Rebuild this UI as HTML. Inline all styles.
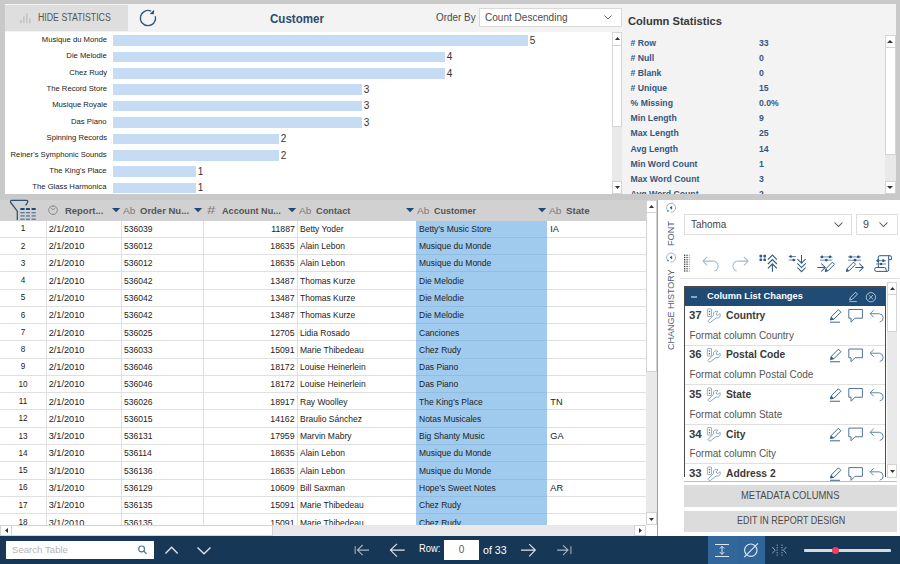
<!DOCTYPE html>
<html><head><meta charset="utf-8"><style>
*{margin:0;padding:0;box-sizing:border-box}
html,body{width:900px;height:564px;overflow:hidden;background:#c9c9c9;font-family:"Liberation Sans",sans-serif;color:#333}
.abs{position:absolute}
.t{position:absolute;white-space:nowrap;line-height:1}
svg{position:absolute;overflow:visible}
</style></head><body>

<div class="abs" style="left:5px;top:3.7px;width:617px;height:28.3px;background:#f3f3f3;"></div>
<div class="abs" style="left:5px;top:5px;width:123.3px;height:25.7px;background:#dedede;"></div>
<svg style="left:15px;top:10px" width="20" height="16" viewBox="15 10 20 16"><g fill="#c4c4c4"><rect x="20.1" y="20" width="1.5" height="3.2"/><rect x="23.1" y="16.2" width="1.5" height="7"/><rect x="26.1" y="13" width="1.5" height="10.2"/><rect x="29.1" y="18.2" width="1.5" height="5"/></g></svg>
<div class="t" style="left:37.91px;transform-origin:0 0;top:12.01px;font-size:10.58px;color:#555;transform:scaleX(0.8294);">HIDE STATISTICS</div>
<svg style="left:136px;top:6px" width="24" height="24" viewBox="0 0 24 24"><path d="M19.34 10.13 A7.6 7.6 0 1 1 15.21 5.21" fill="none" stroke="#2f5a83" stroke-width="1.3"/><path d="M13.8 7.9 L18.2 3.7 L17.7 8.2 Z" fill="#1f4a73"/></svg>
<div class="t" style="left:270.48px;transform-origin:0 0;top:12.93px;font-size:12.32px;font-weight:bold;color:#2b4c6f;transform:scaleX(0.9404);">Customer</div>
<div class="t" style="left:435.85px;transform-origin:0 0;top:12.31px;font-size:10.58px;color:#4a4a4a;transform:scaleX(0.9353);">Order By</div>
<div class="abs" style="left:478.7px;top:8px;width:143.3px;height:19.3px;background:#fff;border:1px solid #d9d9d9"></div>
<div class="t" style="left:485.35px;transform-origin:0 0;top:12.31px;font-size:10.58px;color:#4a4a4a;transform:scaleX(0.9490);">Count Descending</div>
<svg style="left:604px;top:15px" width="8" height="5"><path d="M0.5 0.5 L4 4 L7.5 0.5" fill="none" stroke="#666" stroke-width="1"/></svg>
<div class="abs" style="left:5px;top:32px;width:607px;height:162px;background:#fff;"></div>
<div class="t" style="right:793.33px;transform-origin:100% 0;top:35.80px;font-size:8.12px;color:#222;transform:scaleX(0.945);">Musique du Monde</div>
<div class="abs" style="left:113.3px;top:35.1px;width:414.7px;height:10.7px;background:#c6dcf4;"></div>
<div class="t" style="left:529.65px;transform-origin:0 0;top:35.80px;font-size:10.00px;color:#333;">5</div>
<div class="t" style="right:793.33px;transform-origin:100% 0;top:52.20px;font-size:8.12px;color:#222;transform:scaleX(0.945);">Die Melodie</div>
<div class="abs" style="left:113.3px;top:51.5px;width:331.7px;height:10.7px;background:#c6dcf4;"></div>
<div class="t" style="left:446.65px;transform-origin:0 0;top:52.20px;font-size:10.00px;color:#333;">4</div>
<div class="t" style="right:793.33px;transform-origin:100% 0;top:68.60px;font-size:8.12px;color:#222;transform:scaleX(0.945);">Chez Rudy</div>
<div class="abs" style="left:113.3px;top:67.9px;width:331.7px;height:10.7px;background:#c6dcf4;"></div>
<div class="t" style="left:446.65px;transform-origin:0 0;top:68.60px;font-size:10.00px;color:#333;">4</div>
<div class="t" style="right:793.33px;transform-origin:100% 0;top:85.00px;font-size:8.12px;color:#222;transform:scaleX(0.945);">The Record Store</div>
<div class="abs" style="left:113.3px;top:84.3px;width:248.7px;height:10.7px;background:#c6dcf4;"></div>
<div class="t" style="left:363.65px;transform-origin:0 0;top:85.00px;font-size:10.00px;color:#333;">3</div>
<div class="t" style="right:793.33px;transform-origin:100% 0;top:101.40px;font-size:8.12px;color:#222;transform:scaleX(0.945);">Musique Royale</div>
<div class="abs" style="left:113.3px;top:100.7px;width:248.7px;height:10.7px;background:#c6dcf4;"></div>
<div class="t" style="left:363.65px;transform-origin:0 0;top:101.40px;font-size:10.00px;color:#333;">3</div>
<div class="t" style="right:793.33px;transform-origin:100% 0;top:117.80px;font-size:8.12px;color:#222;transform:scaleX(0.945);">Das Piano</div>
<div class="abs" style="left:113.3px;top:117.1px;width:248.7px;height:10.7px;background:#c6dcf4;"></div>
<div class="t" style="left:363.65px;transform-origin:0 0;top:117.80px;font-size:10.00px;color:#333;">3</div>
<div class="t" style="right:793.33px;transform-origin:100% 0;top:134.20px;font-size:8.12px;color:#222;transform:scaleX(0.945);">Spinning Records</div>
<div class="abs" style="left:113.3px;top:133.5px;width:165.7px;height:10.7px;background:#c6dcf4;"></div>
<div class="t" style="left:280.65px;transform-origin:0 0;top:134.20px;font-size:10.00px;color:#333;">2</div>
<div class="t" style="right:793.33px;transform-origin:100% 0;top:150.60px;font-size:8.12px;color:#222;transform:scaleX(0.945);">Reiner's Symphonic Sounds</div>
<div class="abs" style="left:113.3px;top:149.9px;width:165.7px;height:10.7px;background:#c6dcf4;"></div>
<div class="t" style="left:280.65px;transform-origin:0 0;top:150.60px;font-size:10.00px;color:#333;">2</div>
<div class="t" style="right:793.33px;transform-origin:100% 0;top:167.00px;font-size:8.12px;color:#222;transform:scaleX(0.945);">The King's Place</div>
<div class="abs" style="left:113.3px;top:166.3px;width:82.7px;height:10.7px;background:#c6dcf4;"></div>
<div class="t" style="left:197.65px;transform-origin:0 0;top:167.00px;font-size:10.00px;color:#333;">1</div>
<div class="t" style="right:793.33px;transform-origin:100% 0;top:183.40px;font-size:8.12px;color:#222;transform:scaleX(0.945);">The Glass Harmonica</div>
<div class="abs" style="left:113.3px;top:182.7px;width:82.7px;height:10.7px;background:#c6dcf4;"></div>
<div class="t" style="left:197.65px;transform-origin:0 0;top:183.40px;font-size:10.00px;color:#333;">1</div>
<div class="abs" style="left:612px;top:32px;width:10px;height:162px;background:#e9e9e9;"></div>
<div class="abs" style="left:612px;top:32px;width:10px;height:95px;background:#fff;border:1px solid #d4d4d4"></div>
<div class="abs" style="left:612px;top:32px;width:10px;height:13.5px;background:#fff;border:1px solid #d4d4d4"></div>
<svg style="left:614.5px;top:37px" width="5" height="3"><path d="M0 3 L2.5 0 L5 3Z" fill="#333"/></svg>
<div class="abs" style="left:612px;top:181px;width:10px;height:13px;background:#fff;border:1px solid #d4d4d4"></div>
<svg style="left:614.5px;top:186px" width="5" height="3"><path d="M0 0 L2.5 3 L5 0Z" fill="#333"/></svg>
<div class="abs" style="left:622px;top:3.7px;width:273.6px;height:190.3px;background:#f3f3f3;"></div>
<div class="t" style="left:627.80px;transform-origin:0 0;top:16.14px;font-size:11.59px;font-weight:bold;color:#383838;transform:scaleX(0.9602);">Column Statistics</div>
<div class="abs" style="left:0;top:0;width:885px;height:193.6px;overflow:hidden">
<div class="t" style="left:630.51px;transform-origin:0 0;top:39.01px;font-size:8.70px;font-weight:bold;color:#34577d;"># Row</div>
<div class="t" style="left:759.01px;transform-origin:0 0;top:39.01px;font-size:8.70px;font-weight:bold;color:#34577d;">33</div>
<div class="t" style="left:630.51px;transform-origin:0 0;top:54.08px;font-size:8.70px;font-weight:bold;color:#34577d;"># Null</div>
<div class="t" style="left:759.01px;transform-origin:0 0;top:54.08px;font-size:8.70px;font-weight:bold;color:#34577d;">0</div>
<div class="t" style="left:630.51px;transform-origin:0 0;top:69.15px;font-size:8.70px;font-weight:bold;color:#34577d;"># Blank</div>
<div class="t" style="left:759.01px;transform-origin:0 0;top:69.15px;font-size:8.70px;font-weight:bold;color:#34577d;">0</div>
<div class="t" style="left:630.51px;transform-origin:0 0;top:84.22px;font-size:8.70px;font-weight:bold;color:#34577d;"># Unique</div>
<div class="t" style="left:759.01px;transform-origin:0 0;top:84.22px;font-size:8.70px;font-weight:bold;color:#34577d;">15</div>
<div class="t" style="left:630.51px;transform-origin:0 0;top:99.29px;font-size:8.70px;font-weight:bold;color:#34577d;">% Missing</div>
<div class="t" style="left:759.01px;transform-origin:0 0;top:99.29px;font-size:8.70px;font-weight:bold;color:#34577d;">0.0%</div>
<div class="t" style="left:630.51px;transform-origin:0 0;top:114.36px;font-size:8.70px;font-weight:bold;color:#34577d;">Min Length</div>
<div class="t" style="left:759.01px;transform-origin:0 0;top:114.36px;font-size:8.70px;font-weight:bold;color:#34577d;">9</div>
<div class="t" style="left:630.51px;transform-origin:0 0;top:129.43px;font-size:8.70px;font-weight:bold;color:#34577d;">Max Length</div>
<div class="t" style="left:759.01px;transform-origin:0 0;top:129.43px;font-size:8.70px;font-weight:bold;color:#34577d;">25</div>
<div class="t" style="left:630.51px;transform-origin:0 0;top:144.50px;font-size:8.70px;font-weight:bold;color:#34577d;">Avg Length</div>
<div class="t" style="left:759.01px;transform-origin:0 0;top:144.50px;font-size:8.70px;font-weight:bold;color:#34577d;">14</div>
<div class="t" style="left:630.51px;transform-origin:0 0;top:159.57px;font-size:8.70px;font-weight:bold;color:#34577d;">Min Word Count</div>
<div class="t" style="left:759.01px;transform-origin:0 0;top:159.57px;font-size:8.70px;font-weight:bold;color:#34577d;">1</div>
<div class="t" style="left:630.51px;transform-origin:0 0;top:174.64px;font-size:8.70px;font-weight:bold;color:#34577d;">Max Word Count</div>
<div class="t" style="left:759.01px;transform-origin:0 0;top:174.64px;font-size:8.70px;font-weight:bold;color:#34577d;">3</div>
<div class="t" style="left:630.51px;transform-origin:0 0;top:189.71px;font-size:8.70px;font-weight:bold;color:#34577d;">Avg Word Count</div>
<div class="t" style="left:759.01px;transform-origin:0 0;top:189.71px;font-size:8.70px;font-weight:bold;color:#34577d;">2</div>
</div>
<div class="abs" style="left:885.2px;top:35.1px;width:10.4px;height:158.9px;background:#e9e9e9;"></div>
<div class="abs" style="left:885.2px;top:35.1px;width:10.4px;height:120.4px;background:#fff;border:1px solid #d4d4d4"></div>
<div class="abs" style="left:885.2px;top:35.1px;width:10.4px;height:13px;background:#fff;border:1px solid #d4d4d4"></div>
<svg style="left:887.4px;top:40.2px" width="6" height="3"><path d="M0 3 L3 0 L6 3Z" fill="#333"/></svg>
<div class="abs" style="left:885.2px;top:181px;width:10.4px;height:13px;background:#fff;border:1px solid #d4d4d4"></div>
<svg style="left:887.4px;top:186px" width="6" height="3"><path d="M0 0 L3 3 L6 0Z" fill="#333"/></svg>
<div class="abs" style="left:0;top:199.5px;width:646px;height:325.79999999999995px;background:#fff;overflow:hidden">
<div class="abs" style="left:0px;top:0px;width:646px;height:21.0px;background:#d1d1d1;"></div>
<div class="abs" style="left:415.8px;top:21.0px;width:130.9px;height:400px;background:#a0caee;"></div>
<div class="abs" style="left:0px;top:37.27px;width:415.8px;height:1px;background:#e0e0e0;"></div>
<div class="abs" style="left:415.8px;top:37.27px;width:130.9px;height:1px;background:#92bce0;"></div>
<div class="abs" style="left:546.7px;top:37.27px;width:99.3px;height:1px;background:#e0e0e0;"></div>
<div class="abs" style="left:0px;top:54.54px;width:415.8px;height:1px;background:#e0e0e0;"></div>
<div class="abs" style="left:415.8px;top:54.54px;width:130.9px;height:1px;background:#92bce0;"></div>
<div class="abs" style="left:546.7px;top:54.54px;width:99.3px;height:1px;background:#e0e0e0;"></div>
<div class="abs" style="left:0px;top:71.81px;width:415.8px;height:1px;background:#e0e0e0;"></div>
<div class="abs" style="left:415.8px;top:71.81px;width:130.9px;height:1px;background:#92bce0;"></div>
<div class="abs" style="left:546.7px;top:71.81px;width:99.3px;height:1px;background:#e0e0e0;"></div>
<div class="abs" style="left:0px;top:89.08px;width:415.8px;height:1px;background:#e0e0e0;"></div>
<div class="abs" style="left:415.8px;top:89.08px;width:130.9px;height:1px;background:#92bce0;"></div>
<div class="abs" style="left:546.7px;top:89.08px;width:99.3px;height:1px;background:#e0e0e0;"></div>
<div class="abs" style="left:0px;top:106.35px;width:415.8px;height:1px;background:#e0e0e0;"></div>
<div class="abs" style="left:415.8px;top:106.35px;width:130.9px;height:1px;background:#92bce0;"></div>
<div class="abs" style="left:546.7px;top:106.35px;width:99.3px;height:1px;background:#e0e0e0;"></div>
<div class="abs" style="left:0px;top:123.62px;width:415.8px;height:1px;background:#e0e0e0;"></div>
<div class="abs" style="left:415.8px;top:123.62px;width:130.9px;height:1px;background:#92bce0;"></div>
<div class="abs" style="left:546.7px;top:123.62px;width:99.3px;height:1px;background:#e0e0e0;"></div>
<div class="abs" style="left:0px;top:140.89px;width:415.8px;height:1px;background:#e0e0e0;"></div>
<div class="abs" style="left:415.8px;top:140.89px;width:130.9px;height:1px;background:#92bce0;"></div>
<div class="abs" style="left:546.7px;top:140.89px;width:99.3px;height:1px;background:#e0e0e0;"></div>
<div class="abs" style="left:0px;top:158.16px;width:415.8px;height:1px;background:#e0e0e0;"></div>
<div class="abs" style="left:415.8px;top:158.16px;width:130.9px;height:1px;background:#92bce0;"></div>
<div class="abs" style="left:546.7px;top:158.16px;width:99.3px;height:1px;background:#e0e0e0;"></div>
<div class="abs" style="left:0px;top:175.43px;width:415.8px;height:1px;background:#e0e0e0;"></div>
<div class="abs" style="left:415.8px;top:175.43px;width:130.9px;height:1px;background:#92bce0;"></div>
<div class="abs" style="left:546.7px;top:175.43px;width:99.3px;height:1px;background:#e0e0e0;"></div>
<div class="abs" style="left:0px;top:192.7px;width:415.8px;height:1px;background:#e0e0e0;"></div>
<div class="abs" style="left:415.8px;top:192.7px;width:130.9px;height:1px;background:#92bce0;"></div>
<div class="abs" style="left:546.7px;top:192.7px;width:99.3px;height:1px;background:#e0e0e0;"></div>
<div class="abs" style="left:0px;top:209.97px;width:415.8px;height:1px;background:#e0e0e0;"></div>
<div class="abs" style="left:415.8px;top:209.97px;width:130.9px;height:1px;background:#92bce0;"></div>
<div class="abs" style="left:546.7px;top:209.97px;width:99.3px;height:1px;background:#e0e0e0;"></div>
<div class="abs" style="left:0px;top:227.24px;width:415.8px;height:1px;background:#e0e0e0;"></div>
<div class="abs" style="left:415.8px;top:227.24px;width:130.9px;height:1px;background:#92bce0;"></div>
<div class="abs" style="left:546.7px;top:227.24px;width:99.3px;height:1px;background:#e0e0e0;"></div>
<div class="abs" style="left:0px;top:244.51px;width:415.8px;height:1px;background:#e0e0e0;"></div>
<div class="abs" style="left:415.8px;top:244.51px;width:130.9px;height:1px;background:#92bce0;"></div>
<div class="abs" style="left:546.7px;top:244.51px;width:99.3px;height:1px;background:#e0e0e0;"></div>
<div class="abs" style="left:0px;top:261.78px;width:415.8px;height:1px;background:#e0e0e0;"></div>
<div class="abs" style="left:415.8px;top:261.78px;width:130.9px;height:1px;background:#92bce0;"></div>
<div class="abs" style="left:546.7px;top:261.78px;width:99.3px;height:1px;background:#e0e0e0;"></div>
<div class="abs" style="left:0px;top:279.05px;width:415.8px;height:1px;background:#e0e0e0;"></div>
<div class="abs" style="left:415.8px;top:279.05px;width:130.9px;height:1px;background:#92bce0;"></div>
<div class="abs" style="left:546.7px;top:279.05px;width:99.3px;height:1px;background:#e0e0e0;"></div>
<div class="abs" style="left:0px;top:296.32px;width:415.8px;height:1px;background:#e0e0e0;"></div>
<div class="abs" style="left:415.8px;top:296.32px;width:130.9px;height:1px;background:#92bce0;"></div>
<div class="abs" style="left:546.7px;top:296.32px;width:99.3px;height:1px;background:#e0e0e0;"></div>
<div class="abs" style="left:0px;top:313.59px;width:415.8px;height:1px;background:#e0e0e0;"></div>
<div class="abs" style="left:415.8px;top:313.59px;width:130.9px;height:1px;background:#92bce0;"></div>
<div class="abs" style="left:546.7px;top:313.59px;width:99.3px;height:1px;background:#e0e0e0;"></div>
<div class="abs" style="left:0px;top:330.86px;width:415.8px;height:1px;background:#e0e0e0;"></div>
<div class="abs" style="left:415.8px;top:330.86px;width:130.9px;height:1px;background:#92bce0;"></div>
<div class="abs" style="left:546.7px;top:330.86px;width:99.3px;height:1px;background:#e0e0e0;"></div>
<div class="abs" style="left:0px;top:348.13px;width:415.8px;height:1px;background:#e0e0e0;"></div>
<div class="abs" style="left:415.8px;top:348.13px;width:130.9px;height:1px;background:#92bce0;"></div>
<div class="abs" style="left:546.7px;top:348.13px;width:99.3px;height:1px;background:#e0e0e0;"></div>
<div class="abs" style="left:45.7px;top:21.0px;width:1px;height:400px;background:#e0e0e0;"></div>
<div class="abs" style="left:121.0px;top:21.0px;width:1px;height:400px;background:#e0e0e0;"></div>
<div class="abs" style="left:202.8px;top:21.0px;width:1px;height:400px;background:#e0e0e0;"></div>
<div class="abs" style="left:297.0px;top:21.0px;width:1px;height:400px;background:#e0e0e0;"></div>
</div>
<svg style="left:6px;top:198px" width="34" height="24" viewBox="6 198 34 24"><path d="M10.7 202.5 Q9.9 200.4 11.8 200.4 L26.5 200.4 Q28.4 200.6 27.5 202.5 L25.6 205.3 M10.7 202.5 L17.3 211.2 L17.3 220" fill="none" stroke="#2a5178" stroke-width="1.25"/><rect x="20.3" y="208.1" width="4.4" height="1.9" rx="0.6" fill="#1f4a73"/><rect x="25.9" y="208.1" width="4.1" height="1.9" rx="0.6" fill="#1f4a73"/><rect x="31.5" y="208.1" width="4.3" height="1.9" rx="0.6" fill="#1f4a73"/><rect x="20.3" y="212.1" width="4.4" height="1.25" fill="#52769a"/><rect x="20.3" y="215.3" width="4.4" height="1.25" fill="#52769a"/><rect x="20.3" y="218.6" width="4.4" height="1.25" fill="#52769a"/><rect x="25.9" y="212.1" width="4.1" height="1.25" fill="#52769a"/><rect x="25.9" y="215.3" width="4.1" height="1.25" fill="#52769a"/><rect x="25.9" y="218.6" width="4.1" height="1.25" fill="#52769a"/><rect x="31.5" y="212.1" width="4.3" height="1.25" fill="#52769a"/><rect x="31.5" y="215.3" width="4.3" height="1.25" fill="#52769a"/><rect x="31.5" y="218.6" width="4.3" height="1.25" fill="#52769a"/></svg>
<svg style="left:47.9px;top:205px" width="10" height="10" viewBox="0 0 10 10"><circle cx="5" cy="5.2" r="4.3" fill="none" stroke="#7a7a7a" stroke-width="0.8"/><path d="M2.8 3 L5 4.8 L7.2 3.3" fill="none" stroke="#7a7a7a" stroke-width="0.8"/><path d="M5 0.4 L5 1.6 M5 8.8 L5 10" stroke="#7a7a7a" stroke-width="0.8"/></svg>
<div class="t" style="left:65.07px;transform-origin:0 0;top:205.67px;font-size:9.57px;font-weight:bold;color:#555;transform:scaleX(0.9885);">Report...</div>
<svg style="left:112.2px;top:207.8px" width="8.2" height="4.3" viewBox="0 0 8.2 4.3"><path d="M0 0 L8.2 0 L4.1 4.3Z" fill="#1f4a73"/></svg>
<div class="t" style="left:122.74px;transform-origin:0 0;top:205.77px;font-size:9.57px;color:#7c7c7c;transform:scaleX(1.0607);">Ab</div>
<div class="t" style="left:139.57px;transform-origin:0 0;top:205.67px;font-size:9.57px;font-weight:bold;color:#555;transform:scaleX(0.9926);">Order Nu...</div>
<svg style="left:193.8px;top:207.8px" width="8.2" height="4.3" viewBox="0 0 8.2 4.3"><path d="M0 0 L8.2 0 L4.1 4.3Z" fill="#1f4a73"/></svg>
<div class="t" style="left:206.63px;transform-origin:0 0;top:204.69px;font-size:11.30px;color:#7c7c7c;transform:scaleX(1.3259);">#</div>
<div class="t" style="left:221.59px;transform-origin:0 0;top:205.67px;font-size:9.57px;font-weight:bold;color:#555;transform:scaleX(0.9545);">Account Nu...</div>
<svg style="left:287.8px;top:207.8px" width="8.2" height="4.3" viewBox="0 0 8.2 4.3"><path d="M0 0 L8.2 0 L4.1 4.3Z" fill="#1f4a73"/></svg>
<div class="t" style="left:298.84px;transform-origin:0 0;top:205.77px;font-size:9.57px;color:#7c7c7c;transform:scaleX(1.0607);">Ab</div>
<div class="t" style="left:315.58px;transform-origin:0 0;top:205.67px;font-size:9.57px;font-weight:bold;color:#555;transform:scaleX(0.9674);">Contact</div>
<svg style="left:406.3px;top:207.8px" width="8.2" height="4.3" viewBox="0 0 8.2 4.3"><path d="M0 0 L8.2 0 L4.1 4.3Z" fill="#1f4a73"/></svg>
<div class="t" style="left:417.24px;transform-origin:0 0;top:205.77px;font-size:9.57px;color:#7c7c7c;transform:scaleX(1.0607);">Ab</div>
<div class="t" style="left:434.39px;transform-origin:0 0;top:205.67px;font-size:9.57px;font-weight:bold;color:#555;transform:scaleX(0.9434);">Customer</div>
<svg style="left:537.6px;top:207.8px" width="8.2" height="4.3" viewBox="0 0 8.2 4.3"><path d="M0 0 L8.2 0 L4.1 4.3Z" fill="#1f4a73"/></svg>
<div class="t" style="left:548.54px;transform-origin:0 0;top:205.77px;font-size:9.57px;color:#7c7c7c;transform:scaleX(1.0607);">Ab</div>
<div class="t" style="left:565.56px;transform-origin:0 0;top:205.67px;font-size:9.57px;font-weight:bold;color:#555;transform:scaleX(1.0164);">State</div>
<div class="t" style="left:20.72px;width:4.56px;text-align:center;transform-origin:50% 0;top:225.29px;font-size:8.20px;font-weight:bold;color:#1a1a1a;transform:scaleY(1.04);-webkit-text-stroke:0;font-weight:normal;">1</div>
<div class="t" style="left:48.69px;transform-origin:0 0;top:224.93px;font-size:9.20px;color:#222;">2/1/2010</div>
<div class="t" style="left:124.49px;transform-origin:0 0;top:224.93px;font-size:9.20px;color:#222;transform:scaleX(0.93);">536039</div>
<div class="t" style="right:605.59px;transform-origin:100% 0;top:224.93px;font-size:9.20px;color:#222;transform:scaleX(0.95);">11887</div>
<div class="t" style="left:299.99px;transform-origin:0 0;top:224.93px;font-size:9.20px;color:#222;transform:scaleX(0.925);">Betty Yoder</div>
<div class="t" style="left:419.19px;transform-origin:0 0;top:224.93px;font-size:9.20px;color:#222;transform:scaleX(0.925);">Betty’s Music Store</div>
<div class="t" style="left:550.29px;transform-origin:0 0;top:224.93px;font-size:9.20px;color:#222;">IA</div>
<div class="t" style="left:20.72px;width:4.56px;text-align:center;transform-origin:50% 0;top:242.56px;font-size:8.20px;font-weight:bold;color:#1a1a1a;transform:scaleY(1.04);-webkit-text-stroke:0;font-weight:normal;">2</div>
<div class="t" style="left:48.69px;transform-origin:0 0;top:242.20px;font-size:9.20px;color:#222;">2/1/2010</div>
<div class="t" style="left:124.49px;transform-origin:0 0;top:242.20px;font-size:9.20px;color:#222;transform:scaleX(0.93);">536012</div>
<div class="t" style="right:605.59px;transform-origin:100% 0;top:242.20px;font-size:9.20px;color:#222;transform:scaleX(0.95);">18635</div>
<div class="t" style="left:299.99px;transform-origin:0 0;top:242.20px;font-size:9.20px;color:#222;transform:scaleX(0.925);">Alain Lebon</div>
<div class="t" style="left:419.19px;transform-origin:0 0;top:242.20px;font-size:9.20px;color:#222;transform:scaleX(0.925);">Musique du Monde</div>
<div class="t" style="left:20.72px;width:4.56px;text-align:center;transform-origin:50% 0;top:259.83px;font-size:8.20px;font-weight:bold;color:#1a1a1a;transform:scaleY(1.04);-webkit-text-stroke:0;font-weight:normal;">3</div>
<div class="t" style="left:48.69px;transform-origin:0 0;top:259.47px;font-size:9.20px;color:#222;">2/1/2010</div>
<div class="t" style="left:124.49px;transform-origin:0 0;top:259.47px;font-size:9.20px;color:#222;transform:scaleX(0.93);">536012</div>
<div class="t" style="right:605.59px;transform-origin:100% 0;top:259.47px;font-size:9.20px;color:#222;transform:scaleX(0.95);">18635</div>
<div class="t" style="left:299.99px;transform-origin:0 0;top:259.47px;font-size:9.20px;color:#222;transform:scaleX(0.925);">Alain Lebon</div>
<div class="t" style="left:419.19px;transform-origin:0 0;top:259.47px;font-size:9.20px;color:#222;transform:scaleX(0.925);">Musique du Monde</div>
<div class="t" style="left:20.72px;width:4.56px;text-align:center;transform-origin:50% 0;top:277.10px;font-size:8.20px;font-weight:bold;color:#1a1a1a;transform:scaleY(1.04);-webkit-text-stroke:0;font-weight:normal;">4</div>
<div class="t" style="left:48.69px;transform-origin:0 0;top:276.74px;font-size:9.20px;color:#222;">2/1/2010</div>
<div class="t" style="left:124.49px;transform-origin:0 0;top:276.74px;font-size:9.20px;color:#222;transform:scaleX(0.93);">536042</div>
<div class="t" style="right:605.59px;transform-origin:100% 0;top:276.74px;font-size:9.20px;color:#222;transform:scaleX(0.95);">13487</div>
<div class="t" style="left:299.99px;transform-origin:0 0;top:276.74px;font-size:9.20px;color:#222;transform:scaleX(0.925);">Thomas Kurze</div>
<div class="t" style="left:419.19px;transform-origin:0 0;top:276.74px;font-size:9.20px;color:#222;transform:scaleX(0.925);">Die Melodie</div>
<div class="t" style="left:20.72px;width:4.56px;text-align:center;transform-origin:50% 0;top:294.37px;font-size:8.20px;font-weight:bold;color:#1a1a1a;transform:scaleY(1.04);-webkit-text-stroke:0;font-weight:normal;">5</div>
<div class="t" style="left:48.69px;transform-origin:0 0;top:294.01px;font-size:9.20px;color:#222;">2/1/2010</div>
<div class="t" style="left:124.49px;transform-origin:0 0;top:294.01px;font-size:9.20px;color:#222;transform:scaleX(0.93);">536042</div>
<div class="t" style="right:605.59px;transform-origin:100% 0;top:294.01px;font-size:9.20px;color:#222;transform:scaleX(0.95);">13487</div>
<div class="t" style="left:299.99px;transform-origin:0 0;top:294.01px;font-size:9.20px;color:#222;transform:scaleX(0.925);">Thomas Kurze</div>
<div class="t" style="left:419.19px;transform-origin:0 0;top:294.01px;font-size:9.20px;color:#222;transform:scaleX(0.925);">Die Melodie</div>
<div class="t" style="left:20.72px;width:4.56px;text-align:center;transform-origin:50% 0;top:311.64px;font-size:8.20px;font-weight:bold;color:#1a1a1a;transform:scaleY(1.04);-webkit-text-stroke:0;font-weight:normal;">6</div>
<div class="t" style="left:48.69px;transform-origin:0 0;top:311.28px;font-size:9.20px;color:#222;">2/1/2010</div>
<div class="t" style="left:124.49px;transform-origin:0 0;top:311.28px;font-size:9.20px;color:#222;transform:scaleX(0.93);">536042</div>
<div class="t" style="right:605.59px;transform-origin:100% 0;top:311.28px;font-size:9.20px;color:#222;transform:scaleX(0.95);">13487</div>
<div class="t" style="left:299.99px;transform-origin:0 0;top:311.28px;font-size:9.20px;color:#222;transform:scaleX(0.925);">Thomas Kurze</div>
<div class="t" style="left:419.19px;transform-origin:0 0;top:311.28px;font-size:9.20px;color:#222;transform:scaleX(0.925);">Die Melodie</div>
<div class="t" style="left:20.72px;width:4.56px;text-align:center;transform-origin:50% 0;top:328.91px;font-size:8.20px;font-weight:bold;color:#1a1a1a;transform:scaleY(1.04);-webkit-text-stroke:0;font-weight:normal;">7</div>
<div class="t" style="left:48.69px;transform-origin:0 0;top:328.55px;font-size:9.20px;color:#222;">2/1/2010</div>
<div class="t" style="left:124.49px;transform-origin:0 0;top:328.55px;font-size:9.20px;color:#222;transform:scaleX(0.93);">536025</div>
<div class="t" style="right:605.59px;transform-origin:100% 0;top:328.55px;font-size:9.20px;color:#222;transform:scaleX(0.95);">12705</div>
<div class="t" style="left:299.99px;transform-origin:0 0;top:328.55px;font-size:9.20px;color:#222;transform:scaleX(0.925);">Lidia Rosado</div>
<div class="t" style="left:419.19px;transform-origin:0 0;top:328.55px;font-size:9.20px;color:#222;transform:scaleX(0.925);">Canciones</div>
<div class="t" style="left:20.72px;width:4.56px;text-align:center;transform-origin:50% 0;top:346.18px;font-size:8.20px;font-weight:bold;color:#1a1a1a;transform:scaleY(1.04);-webkit-text-stroke:0;font-weight:normal;">8</div>
<div class="t" style="left:48.69px;transform-origin:0 0;top:345.82px;font-size:9.20px;color:#222;">2/1/2010</div>
<div class="t" style="left:124.49px;transform-origin:0 0;top:345.82px;font-size:9.20px;color:#222;transform:scaleX(0.93);">536033</div>
<div class="t" style="right:605.59px;transform-origin:100% 0;top:345.82px;font-size:9.20px;color:#222;transform:scaleX(0.95);">15091</div>
<div class="t" style="left:299.99px;transform-origin:0 0;top:345.82px;font-size:9.20px;color:#222;transform:scaleX(0.925);">Marie Thibedeau</div>
<div class="t" style="left:419.19px;transform-origin:0 0;top:345.82px;font-size:9.20px;color:#222;transform:scaleX(0.925);">Chez Rudy</div>
<div class="t" style="left:20.72px;width:4.56px;text-align:center;transform-origin:50% 0;top:363.45px;font-size:8.20px;font-weight:bold;color:#1a1a1a;transform:scaleY(1.04);-webkit-text-stroke:0;font-weight:normal;">9</div>
<div class="t" style="left:48.69px;transform-origin:0 0;top:363.09px;font-size:9.20px;color:#222;">2/1/2010</div>
<div class="t" style="left:124.49px;transform-origin:0 0;top:363.09px;font-size:9.20px;color:#222;transform:scaleX(0.93);">536046</div>
<div class="t" style="right:605.59px;transform-origin:100% 0;top:363.09px;font-size:9.20px;color:#222;transform:scaleX(0.95);">18172</div>
<div class="t" style="left:299.99px;transform-origin:0 0;top:363.09px;font-size:9.20px;color:#222;transform:scaleX(0.925);">Louise Heinerlein</div>
<div class="t" style="left:419.19px;transform-origin:0 0;top:363.09px;font-size:9.20px;color:#222;transform:scaleX(0.925);">Das Piano</div>
<div class="t" style="left:18.45px;width:9.11px;text-align:center;transform-origin:50% 0;top:380.72px;font-size:8.20px;font-weight:bold;color:#1a1a1a;transform:scaleY(1.04);-webkit-text-stroke:0;font-weight:normal;">10</div>
<div class="t" style="left:48.69px;transform-origin:0 0;top:380.36px;font-size:9.20px;color:#222;">2/1/2010</div>
<div class="t" style="left:124.49px;transform-origin:0 0;top:380.36px;font-size:9.20px;color:#222;transform:scaleX(0.93);">536046</div>
<div class="t" style="right:605.59px;transform-origin:100% 0;top:380.36px;font-size:9.20px;color:#222;transform:scaleX(0.95);">18172</div>
<div class="t" style="left:299.99px;transform-origin:0 0;top:380.36px;font-size:9.20px;color:#222;transform:scaleX(0.925);">Louise Heinerlein</div>
<div class="t" style="left:419.19px;transform-origin:0 0;top:380.36px;font-size:9.20px;color:#222;transform:scaleX(0.925);">Das Piano</div>
<div class="t" style="left:18.67px;width:8.66px;text-align:center;transform-origin:50% 0;top:397.99px;font-size:8.20px;font-weight:bold;color:#1a1a1a;transform:scaleY(1.04);-webkit-text-stroke:0;font-weight:normal;">11</div>
<div class="t" style="left:48.69px;transform-origin:0 0;top:397.63px;font-size:9.20px;color:#222;">2/1/2010</div>
<div class="t" style="left:124.49px;transform-origin:0 0;top:397.63px;font-size:9.20px;color:#222;transform:scaleX(0.93);">536026</div>
<div class="t" style="right:605.59px;transform-origin:100% 0;top:397.63px;font-size:9.20px;color:#222;transform:scaleX(0.95);">18917</div>
<div class="t" style="left:299.99px;transform-origin:0 0;top:397.63px;font-size:9.20px;color:#222;transform:scaleX(0.925);">Ray Woolley</div>
<div class="t" style="left:419.19px;transform-origin:0 0;top:397.63px;font-size:9.20px;color:#222;transform:scaleX(0.925);">The King’s Place</div>
<div class="t" style="left:550.29px;transform-origin:0 0;top:397.63px;font-size:9.20px;color:#222;">TN</div>
<div class="t" style="left:18.45px;width:9.11px;text-align:center;transform-origin:50% 0;top:415.26px;font-size:8.20px;font-weight:bold;color:#1a1a1a;transform:scaleY(1.04);-webkit-text-stroke:0;font-weight:normal;">12</div>
<div class="t" style="left:48.69px;transform-origin:0 0;top:414.90px;font-size:9.20px;color:#222;">2/1/2010</div>
<div class="t" style="left:124.49px;transform-origin:0 0;top:414.90px;font-size:9.20px;color:#222;transform:scaleX(0.93);">536015</div>
<div class="t" style="right:605.59px;transform-origin:100% 0;top:414.90px;font-size:9.20px;color:#222;transform:scaleX(0.95);">14162</div>
<div class="t" style="left:299.99px;transform-origin:0 0;top:414.90px;font-size:9.20px;color:#222;transform:scaleX(0.925);">Braulio Sánchez</div>
<div class="t" style="left:419.19px;transform-origin:0 0;top:414.90px;font-size:9.20px;color:#222;transform:scaleX(0.925);">Notas Musicales</div>
<div class="t" style="left:18.45px;width:9.11px;text-align:center;transform-origin:50% 0;top:432.53px;font-size:8.20px;font-weight:bold;color:#1a1a1a;transform:scaleY(1.04);-webkit-text-stroke:0;font-weight:normal;">13</div>
<div class="t" style="left:48.69px;transform-origin:0 0;top:432.17px;font-size:9.20px;color:#222;">3/1/2010</div>
<div class="t" style="left:124.49px;transform-origin:0 0;top:432.17px;font-size:9.20px;color:#222;transform:scaleX(0.93);">536131</div>
<div class="t" style="right:605.59px;transform-origin:100% 0;top:432.17px;font-size:9.20px;color:#222;transform:scaleX(0.95);">17959</div>
<div class="t" style="left:299.99px;transform-origin:0 0;top:432.17px;font-size:9.20px;color:#222;transform:scaleX(0.925);">Marvin Mabry</div>
<div class="t" style="left:419.19px;transform-origin:0 0;top:432.17px;font-size:9.20px;color:#222;transform:scaleX(0.925);">Big Shanty Music</div>
<div class="t" style="left:550.29px;transform-origin:0 0;top:432.17px;font-size:9.20px;color:#222;">GA</div>
<div class="t" style="left:18.45px;width:9.11px;text-align:center;transform-origin:50% 0;top:449.80px;font-size:8.20px;font-weight:bold;color:#1a1a1a;transform:scaleY(1.04);-webkit-text-stroke:0;font-weight:normal;">14</div>
<div class="t" style="left:48.69px;transform-origin:0 0;top:449.44px;font-size:9.20px;color:#222;">3/1/2010</div>
<div class="t" style="left:124.49px;transform-origin:0 0;top:449.44px;font-size:9.20px;color:#222;transform:scaleX(0.93);">536114</div>
<div class="t" style="right:605.59px;transform-origin:100% 0;top:449.44px;font-size:9.20px;color:#222;transform:scaleX(0.95);">18635</div>
<div class="t" style="left:299.99px;transform-origin:0 0;top:449.44px;font-size:9.20px;color:#222;transform:scaleX(0.925);">Alain Lebon</div>
<div class="t" style="left:419.19px;transform-origin:0 0;top:449.44px;font-size:9.20px;color:#222;transform:scaleX(0.925);">Musique du Monde</div>
<div class="t" style="left:18.45px;width:9.11px;text-align:center;transform-origin:50% 0;top:467.07px;font-size:8.20px;font-weight:bold;color:#1a1a1a;transform:scaleY(1.04);-webkit-text-stroke:0;font-weight:normal;">15</div>
<div class="t" style="left:48.69px;transform-origin:0 0;top:466.71px;font-size:9.20px;color:#222;">3/1/2010</div>
<div class="t" style="left:124.49px;transform-origin:0 0;top:466.71px;font-size:9.20px;color:#222;transform:scaleX(0.93);">536136</div>
<div class="t" style="right:605.59px;transform-origin:100% 0;top:466.71px;font-size:9.20px;color:#222;transform:scaleX(0.95);">18635</div>
<div class="t" style="left:299.99px;transform-origin:0 0;top:466.71px;font-size:9.20px;color:#222;transform:scaleX(0.925);">Alain Lebon</div>
<div class="t" style="left:419.19px;transform-origin:0 0;top:466.71px;font-size:9.20px;color:#222;transform:scaleX(0.925);">Musique du Monde</div>
<div class="t" style="left:18.45px;width:9.11px;text-align:center;transform-origin:50% 0;top:484.34px;font-size:8.20px;font-weight:bold;color:#1a1a1a;transform:scaleY(1.04);-webkit-text-stroke:0;font-weight:normal;">16</div>
<div class="t" style="left:48.69px;transform-origin:0 0;top:483.98px;font-size:9.20px;color:#222;">3/1/2010</div>
<div class="t" style="left:124.49px;transform-origin:0 0;top:483.98px;font-size:9.20px;color:#222;transform:scaleX(0.93);">536129</div>
<div class="t" style="right:605.59px;transform-origin:100% 0;top:483.98px;font-size:9.20px;color:#222;transform:scaleX(0.95);">10609</div>
<div class="t" style="left:299.99px;transform-origin:0 0;top:483.98px;font-size:9.20px;color:#222;transform:scaleX(0.925);">Bill Saxman</div>
<div class="t" style="left:419.19px;transform-origin:0 0;top:483.98px;font-size:9.20px;color:#222;transform:scaleX(0.925);">Hope’s Sweet Notes</div>
<div class="t" style="left:550.29px;transform-origin:0 0;top:483.98px;font-size:9.20px;color:#222;">AR</div>
<div class="t" style="left:18.45px;width:9.11px;text-align:center;transform-origin:50% 0;top:501.61px;font-size:8.20px;font-weight:bold;color:#1a1a1a;transform:scaleY(1.04);-webkit-text-stroke:0;font-weight:normal;">17</div>
<div class="t" style="left:48.69px;transform-origin:0 0;top:501.25px;font-size:9.20px;color:#222;">3/1/2010</div>
<div class="t" style="left:124.49px;transform-origin:0 0;top:501.25px;font-size:9.20px;color:#222;transform:scaleX(0.93);">536135</div>
<div class="t" style="right:605.59px;transform-origin:100% 0;top:501.25px;font-size:9.20px;color:#222;transform:scaleX(0.95);">15091</div>
<div class="t" style="left:299.99px;transform-origin:0 0;top:501.25px;font-size:9.20px;color:#222;transform:scaleX(0.925);">Marie Thibedeau</div>
<div class="t" style="left:419.19px;transform-origin:0 0;top:501.25px;font-size:9.20px;color:#222;transform:scaleX(0.925);">Chez Rudy</div>
<div class="t" style="left:18.45px;width:9.11px;text-align:center;transform-origin:50% 0;top:518.88px;font-size:8.20px;font-weight:bold;color:#1a1a1a;transform:scaleY(1.04);-webkit-text-stroke:0;font-weight:normal;">18</div>
<div class="t" style="left:48.69px;transform-origin:0 0;top:518.52px;font-size:9.20px;color:#222;">3/1/2010</div>
<div class="t" style="left:124.49px;transform-origin:0 0;top:518.52px;font-size:9.20px;color:#222;transform:scaleX(0.93);">536135</div>
<div class="t" style="right:605.59px;transform-origin:100% 0;top:518.52px;font-size:9.20px;color:#222;transform:scaleX(0.95);">15091</div>
<div class="t" style="left:299.99px;transform-origin:0 0;top:518.52px;font-size:9.20px;color:#222;transform:scaleX(0.925);">Marie Thibedeau</div>
<div class="t" style="left:419.19px;transform-origin:0 0;top:518.52px;font-size:9.20px;color:#222;transform:scaleX(0.925);">Chez Rudy</div>
<div class="abs" style="left:0px;top:525.3px;width:657px;height:10.7px;background:#e9e9e9;"></div>
<div class="abs" style="left:646px;top:199.5px;width:11px;height:325.8px;background:#e9e9e9;"></div>
<div class="abs" style="left:646px;top:199.5px;width:11px;height:172.9px;background:#fff;border:1px solid #d4d4d4"></div>
<div class="abs" style="left:646px;top:199.5px;width:11px;height:13px;background:#fff;border:1px solid #d4d4d4"></div>
<svg style="left:649px;top:204.5px" width="5" height="3"><path d="M0 3 L2.5 0 L5 3Z" fill="#333"/></svg>
<div class="abs" style="left:646px;top:512px;width:11px;height:13.3px;background:#fff;border:1px solid #d4d4d4"></div>
<svg style="left:649px;top:517.5px" width="5" height="3"><path d="M0 0 L2.5 3 L5 0Z" fill="#333"/></svg>
<div class="abs" style="left:0px;top:525.3px;width:273px;height:10.7px;background:#fff;border:1px solid #d4d4d4"></div>
<div class="abs" style="left:0px;top:525.3px;width:12px;height:10.7px;background:#fff;border:1px solid #d4d4d4"></div>
<svg style="left:4.5px;top:528.3px" width="3" height="5"><path d="M3 0 L0 2.5 L3 5Z" fill="#333"/></svg>
<div class="abs" style="left:634px;top:525.3px;width:12px;height:10.7px;background:#fff;border:1px solid #d4d4d4"></div>
<div class="abs" style="left:646px;top:525.3px;width:11px;height:10.7px;background:#fff;"></div>
<svg style="left:639px;top:528.3px" width="3" height="5"><path d="M0 0 L3 2.5 L0 5Z" fill="#333"/></svg>
<div class="abs" style="left:657px;top:199.5px;width:1px;height:336.5px;background:#f07a95;"></div>
<div class="abs" style="left:658px;top:199.5px;width:242px;height:336.5px;background:#fff;"></div>
<svg style="left:660px;top:199px" width="20" height="16" viewBox="660 199 20 16"><path d="M670.7 212.28 A4.5 4.5 0 1 0 667.65 210.69" fill="none" stroke="#9db2c6" stroke-width="1"/><circle cx="668" cy="210.90" r="0.95" fill="#5f80a0"/><path d="M672.1 205.80 L672.1 209.80 L669.6 207.80Z" fill="#2f5a83"/></svg>
<svg style="left:660px;top:249px" width="20" height="16" viewBox="660 249 20 16"><path d="M670.7 261.98 A4.5 4.5 0 1 0 667.65 260.39" fill="none" stroke="#9db2c6" stroke-width="1"/><circle cx="668" cy="260.60" r="0.95" fill="#5f80a0"/><path d="M672.1 255.50 L672.1 259.50 L669.6 257.50Z" fill="#2f5a83"/></svg>
<div class="t" style="left:665.67px;top:245.51px;font-size:9.57px;color:#536170;transform-origin:0 0;transform:rotate(-90deg) scaleX(0.9575)">FONT</div>
<div class="t" style="left:665.87px;top:349.90px;font-size:9.57px;color:#536170;transform-origin:0 0;transform:rotate(-90deg) scaleX(0.9390)">CHANGE HISTORY</div>
<div class="abs" style="left:684.3px;top:214.1px;width:168.2px;height:20.9px;background:#fff;border:1px solid #dedede"></div>
<div class="t" style="left:690.55px;transform-origin:0 0;top:218.58px;font-size:10.72px;color:#444;transform:scaleX(0.9227);">Tahoma</div>
<svg style="left:834.2px;top:221.6px" width="9" height="5.5"><path d="M0.5 0.5 L4.5 4.6 L8.5 0.5" fill="none" stroke="#555" stroke-width="1.05"/></svg>
<div class="abs" style="left:856px;top:214.1px;width:41.5px;height:20.9px;background:#fff;border:1px solid #dedede"></div>
<div class="t" style="left:863.02px;transform-origin:0 0;top:218.58px;font-size:10.72px;color:#444;">9</div>
<svg style="left:879.4px;top:221.6px" width="9" height="5.5"><path d="M0.5 0.5 L4.5 4.6 L8.5 0.5" fill="none" stroke="#555" stroke-width="1.05"/></svg>
<svg style="left:680px;top:250px" width="15" height="26" viewBox="680 250 15 26"><rect x="684.0" y="254.60" width="1.3" height="1.3" fill="#3a3a3a"/><rect x="684.0" y="256.85" width="1.3" height="1.3" fill="#3a3a3a"/><rect x="684.0" y="259.10" width="1.3" height="1.3" fill="#3a3a3a"/><rect x="684.0" y="261.35" width="1.3" height="1.3" fill="#3a3a3a"/><rect x="684.0" y="263.60" width="1.3" height="1.3" fill="#3a3a3a"/><rect x="684.0" y="265.85" width="1.3" height="1.3" fill="#3a3a3a"/><rect x="684.0" y="268.10" width="1.3" height="1.3" fill="#3a3a3a"/><rect x="684.0" y="270.35" width="1.3" height="1.3" fill="#3a3a3a"/><rect x="686.4" y="254.60" width="1.3" height="1.3" fill="#4a4a4a"/><rect x="686.4" y="256.85" width="1.3" height="1.3" fill="#4a4a4a"/><rect x="686.4" y="259.10" width="1.3" height="1.3" fill="#4a4a4a"/><rect x="686.4" y="261.35" width="1.3" height="1.3" fill="#4a4a4a"/><rect x="686.4" y="263.60" width="1.3" height="1.3" fill="#4a4a4a"/><rect x="686.4" y="265.85" width="1.3" height="1.3" fill="#4a4a4a"/><rect x="686.4" y="268.10" width="1.3" height="1.3" fill="#4a4a4a"/><rect x="686.4" y="270.35" width="1.3" height="1.3" fill="#4a4a4a"/><rect x="688.8" y="254.60" width="1.3" height="1.3" fill="#b5b5b5"/><rect x="688.8" y="256.85" width="1.3" height="1.3" fill="#b5b5b5"/><rect x="688.8" y="259.10" width="1.3" height="1.3" fill="#b5b5b5"/><rect x="688.8" y="261.35" width="1.3" height="1.3" fill="#b5b5b5"/><rect x="688.8" y="263.60" width="1.3" height="1.3" fill="#b5b5b5"/><rect x="688.8" y="265.85" width="1.3" height="1.3" fill="#b5b5b5"/><rect x="688.8" y="268.10" width="1.3" height="1.3" fill="#b5b5b5"/><rect x="688.8" y="270.35" width="1.3" height="1.3" fill="#b5b5b5"/></svg>
<svg style="left:700px;top:252px" width="52" height="22" viewBox="700 252 52 22"><path d="M702.8 261.1 L707.2 256.9 M702.8 261.1 L707.2 265.3 M702.8 261.1 L712.5 261.1 A4.6 5 0 0 1 714.4 271.1" fill="none" stroke="#a3b9ce" stroke-width="1.05"/><path d="M748.3 261.1 L743.9 256.9 M748.3 261.1 L743.9 265.3 M748.3 261.1 L738.6 261.1 A4.6 5 0 0 0 736.7 271.1" fill="none" stroke="#a3b9ce" stroke-width="1.05"/></svg>
<svg style="left:756px;top:252px" width="24" height="22" viewBox="756 252 24 22"><rect x="759.5" y="254.8" width="2.6" height="2.6" rx="0.6" fill="#2f5a83"/><rect x="759.5" y="258.4" width="2.6" height="2.6" rx="0.6" fill="#2f5a83"/><rect x="763.4" y="254.8" width="2.6" height="2.6" rx="0.6" fill="#2f5a83"/><rect x="763.4" y="258.4" width="2.6" height="2.6" rx="0.6" fill="#2f5a83"/><path d="M767.9 259.6 L772.4 255.1 L776.9 259.6 M767.9 264 L772.4 259.5 L776.9 264 M767.9 268.3 L772.4 263.8 L776.9 268.3 M772.4 264 L772.4 271.8" fill="none" stroke="#2f5a83" stroke-width="1.1"/></svg>
<svg style="left:786px;top:252px" width="22" height="22" viewBox="786 252 22 22"><path d="M788.7 256.5 L796 256.5 M788.7 260 L795.7 260" stroke="#6a8cad" stroke-width="1"/><circle cx="790.8" cy="256.5" r="1.35" fill="#2f5a83"/><circle cx="793.7" cy="260" r="1.35" fill="#2f5a83"/><path d="M801.5 255 L801.5 263 M797.3 259 L801.5 263.2 L805.7 259 M797.3 263.3 L801.5 267.5 L805.7 263.3 M797.3 267.5 L801.5 271.7 L805.7 267.5" fill="none" stroke="#2f5a83" stroke-width="1.05"/></svg>
<svg style="left:814px;top:252px" width="24" height="22" viewBox="814 252 24 22"><path d="M820 256.9 L832.3 256.9 M820 260.1 L832.3 260.1" stroke="#6a8cad" stroke-width="1"/><circle cx="822" cy="256.9" r="1.35" fill="#2f5a83"/><circle cx="830" cy="256.9" r="1.35" fill="#2f5a83"/><circle cx="826.3" cy="260.1" r="1.35" fill="#2f5a83"/><path d="M817.3 267.5 L825 267.5 M821.3 263.5 L825.2 267.5 L821.3 271.5" fill="none" stroke="#2f5a83" stroke-width="1.05"/><path d="M825.2 271.5 L826 268.6 L832.4 262.2 L834.5 264.3 L828.1 270.7 Z" fill="none" stroke="#2f5a83" stroke-width="0.95"/><path d="M825.2 271.5 L826 268.6 L828.1 270.7Z" fill="#2f5a83"/></svg>
<svg style="left:842px;top:252px" width="24" height="22" viewBox="842 252 24 22"><path d="M848 256.9 L861 256.9 M848 260.2 L861 260.2" stroke="#6a8cad" stroke-width="1"/><circle cx="850.7" cy="256.9" r="1.35" fill="#2f5a83"/><circle cx="858.3" cy="256.9" r="1.35" fill="#2f5a83"/><circle cx="855" cy="260.2" r="1.35" fill="#2f5a83"/><path d="M855.3 267.5 L863 267.5 M859.3 263.5 L863.2 267.5 L859.3 271.5" fill="none" stroke="#2f5a83" stroke-width="1.05"/><path d="M846.3 271.5 L847.1 268.6 L853.5 262.2 L855.6 264.3 L849.2 270.7 Z" fill="none" stroke="#2f5a83" stroke-width="0.95"/><path d="M846.3 271.5 L847.1 268.6 L849.2 270.7Z" fill="#2f5a83"/></svg>
<svg style="left:872px;top:252px" width="24" height="22" viewBox="872 252 24 22"><path d="M878.3 267.3 L878.3 257.2 Q878.3 255.7 879.8 255.7 L890 255.7 Q891.4 255.7 891.4 257.2 L891.4 259.6 L888.7 259.6 L888.7 269.8 Q888.7 271.4 887 271.4 L876.2 271.4 Q874.7 271.4 874.7 269.4 Q874.7 267.5 876.2 267.5 L884.5 267.5 Q886 267.5 886 269.4 Q886 271.4 887 271.4 M888.7 259.6 L888.7 255.7" fill="none" stroke="#2f5a83" stroke-width="1"/><path d="M876 260.7 L886 260.7 M876 264 L886 264" stroke="#6a8cad" stroke-width="1"/><circle cx="878" cy="260.7" r="1.35" fill="#2f5a83"/><circle cx="883.3" cy="260.7" r="1.35" fill="#2f5a83"/><circle cx="881" cy="264" r="1.35" fill="#2f5a83"/></svg>
<div class="abs" style="left:680px;top:277.8px;width:220px;height:1px;background:#e3e3e3;"></div>
<div class="abs" style="left:887.3px;top:282px;width:10.2px;height:195.5px;background:#e9e9e9;"></div>
<div class="abs" style="left:887.3px;top:282px;width:10.2px;height:49.5px;background:#fff;border:1px solid #d4d4d4"></div>
<div class="abs" style="left:887.3px;top:282px;width:10.2px;height:12.6px;background:#fff;border:1px solid #d4d4d4"></div>
<svg style="left:890px;top:287px" width="5" height="3"><path d="M0 3 L2.5 0 L5 3Z" fill="#333"/></svg>
<div class="abs" style="left:887.3px;top:464px;width:10.2px;height:13.5px;background:#fff;border:1px solid #d4d4d4"></div>
<svg style="left:890px;top:469.5px" width="5" height="3"><path d="M0 0 L2.5 3 L5 0Z" fill="#333"/></svg>
<div class="abs" style="left:684px;top:285.6px;width:202.3px;height:191.9px;overflow:hidden;border-style:solid;border-color:#4a4a4a;border-width:2.2px 1.6px 0 1.9px;background:#fff">
<div class="abs" style="left:0px;top:0.2px;width:200px;height:17.8px;background:#1f4b74;"></div>
<div class="abs" style="left:5.8px;top:8.5px;width:6.7px;height:1.5px;background:#8ea5bd;"></div>
<div class="abs" style="left:0px;top:57.0px;width:200px;height:1px;background:#e0e0e0;"></div>
<div class="abs" style="left:0px;top:96.53px;width:200px;height:1px;background:#e0e0e0;"></div>
<div class="abs" style="left:0px;top:136.06px;width:200px;height:1px;background:#e0e0e0;"></div>
<div class="abs" style="left:0px;top:175.59px;width:200px;height:1px;background:#e0e0e0;"></div>
</div>
<div class="abs" style="left:0;top:0;width:886px;height:477.5px;overflow:hidden">
<div class="t" style="left:707.28px;transform-origin:0 0;top:291.47px;font-size:9.57px;font-weight:bold;color:#fff;transform:scaleX(0.9760);">Column List Changes</div>
<div class="t" style="left:688.99px;transform-origin:0 0;top:309.91px;font-size:10.58px;font-weight:bold;color:#3a3a3a;transform:scaleX(1.0804);">37</div>
<div class="t" style="left:725.52px;transform-origin:0 0;top:309.91px;font-size:10.58px;font-weight:bold;color:#3a3a3a;transform:scaleX(0.97);">Country</div>
<div class="t" style="left:689.45px;transform-origin:0 0;top:330.60px;font-size:10.00px;color:#555;">Format column Country</div>
<div class="t" style="left:688.99px;transform-origin:0 0;top:349.44px;font-size:10.58px;font-weight:bold;color:#3a3a3a;transform:scaleX(1.0804);">36</div>
<div class="t" style="left:725.52px;transform-origin:0 0;top:349.44px;font-size:10.58px;font-weight:bold;color:#3a3a3a;transform:scaleX(0.97);">Postal Code</div>
<div class="t" style="left:689.45px;transform-origin:0 0;top:370.13px;font-size:10.00px;color:#555;">Format column Postal Code</div>
<div class="t" style="left:688.99px;transform-origin:0 0;top:388.97px;font-size:10.58px;font-weight:bold;color:#3a3a3a;transform:scaleX(1.0804);">35</div>
<div class="t" style="left:725.52px;transform-origin:0 0;top:388.97px;font-size:10.58px;font-weight:bold;color:#3a3a3a;transform:scaleX(0.97);">State</div>
<div class="t" style="left:689.45px;transform-origin:0 0;top:409.66px;font-size:10.00px;color:#555;">Format column State</div>
<div class="t" style="left:688.99px;transform-origin:0 0;top:428.50px;font-size:10.58px;font-weight:bold;color:#3a3a3a;transform:scaleX(1.0804);">34</div>
<div class="t" style="left:725.52px;transform-origin:0 0;top:428.50px;font-size:10.58px;font-weight:bold;color:#3a3a3a;transform:scaleX(0.97);">City</div>
<div class="t" style="left:689.45px;transform-origin:0 0;top:449.19px;font-size:10.00px;color:#555;">Format column City</div>
<div class="t" style="left:688.99px;transform-origin:0 0;top:468.03px;font-size:10.58px;font-weight:bold;color:#3a3a3a;transform:scaleX(1.0804);">33</div>
<div class="t" style="left:725.52px;transform-origin:0 0;top:468.03px;font-size:10.58px;font-weight:bold;color:#3a3a3a;transform:scaleX(0.97);">Address 2</div>
<div class="t" style="left:689.45px;transform-origin:0 0;top:488.72px;font-size:10.00px;color:#555;">Format column Address 2</div>
</div>
<svg style="left:684px;top:288px" width="202" height="189.5" viewBox="684 288 202 189.5"><g transform="translate(0 0.00)"><rect x="707.4" y="308.9" width="4.1" height="7.6" rx="0.4" fill="none" stroke="#8ea7bf" stroke-width="0.9"/><circle cx="709.45" cy="311.5" r="0.75" fill="#3f6790"/><circle cx="709.45" cy="314.2" r="0.75" fill="#3f6790"/><path d="M709.2 322.3 L708.2 321.3 Q707.9 320.9 708.3 320.5 L713.6 315.2 Q712.8 312.6 714.9 311.6 Q716.6 310.9 718 311.6 L716.2 313.4 L716.6 314.9 L718.1 315.3 L719.9 313.5 Q720.7 315.2 719.8 316.9 Q718.5 318.8 716.1 317.9 L710.3 322.4 Q709.7 322.8 709.2 322.3 Z" fill="none" stroke="#7e9ab5" stroke-width="0.9"/><path d="M830 322.2 L840 322.2" stroke="#4f7399" stroke-width="1.1"/><path d="M830.4 319.9 L831.3 316.8 L838.4 309.7 L840.9 312.2 L833.8 319.3 Z" fill="none" stroke="#2f5a83" stroke-width="0.95"/><path d="M830.4 319.9 L831.3 316.8 L833.8 319.3Z" fill="#2f5a83"/><path d="M848.8 309.5 L862.4 309.5 L862.4 318.2 L855 318.2 L851 322.2 L851 318.2 L848.8 318.2 Z" fill="none" stroke="#4f7399" stroke-width="1"/><path d="M870.1 313.7 L873.7 310.2 M870.1 313.7 L873.7 317.3 M870.1 313.7 L879.3 313.7 A4.3 4.2 0 0 1 879.7 322" fill="none" stroke="#5b7fa3" stroke-width="0.95"/></g><g transform="translate(0 39.53)"><rect x="707.4" y="308.9" width="4.1" height="7.6" rx="0.4" fill="none" stroke="#8ea7bf" stroke-width="0.9"/><circle cx="709.45" cy="311.5" r="0.75" fill="#3f6790"/><circle cx="709.45" cy="314.2" r="0.75" fill="#3f6790"/><path d="M709.2 322.3 L708.2 321.3 Q707.9 320.9 708.3 320.5 L713.6 315.2 Q712.8 312.6 714.9 311.6 Q716.6 310.9 718 311.6 L716.2 313.4 L716.6 314.9 L718.1 315.3 L719.9 313.5 Q720.7 315.2 719.8 316.9 Q718.5 318.8 716.1 317.9 L710.3 322.4 Q709.7 322.8 709.2 322.3 Z" fill="none" stroke="#7e9ab5" stroke-width="0.9"/><path d="M830 322.2 L840 322.2" stroke="#4f7399" stroke-width="1.1"/><path d="M830.4 319.9 L831.3 316.8 L838.4 309.7 L840.9 312.2 L833.8 319.3 Z" fill="none" stroke="#2f5a83" stroke-width="0.95"/><path d="M830.4 319.9 L831.3 316.8 L833.8 319.3Z" fill="#2f5a83"/><path d="M848.8 309.5 L862.4 309.5 L862.4 318.2 L855 318.2 L851 322.2 L851 318.2 L848.8 318.2 Z" fill="none" stroke="#4f7399" stroke-width="1"/><path d="M870.1 313.7 L873.7 310.2 M870.1 313.7 L873.7 317.3 M870.1 313.7 L879.3 313.7 A4.3 4.2 0 0 1 879.7 322" fill="none" stroke="#5b7fa3" stroke-width="0.95"/></g><g transform="translate(0 79.06)"><rect x="707.4" y="308.9" width="4.1" height="7.6" rx="0.4" fill="none" stroke="#8ea7bf" stroke-width="0.9"/><circle cx="709.45" cy="311.5" r="0.75" fill="#3f6790"/><circle cx="709.45" cy="314.2" r="0.75" fill="#3f6790"/><path d="M709.2 322.3 L708.2 321.3 Q707.9 320.9 708.3 320.5 L713.6 315.2 Q712.8 312.6 714.9 311.6 Q716.6 310.9 718 311.6 L716.2 313.4 L716.6 314.9 L718.1 315.3 L719.9 313.5 Q720.7 315.2 719.8 316.9 Q718.5 318.8 716.1 317.9 L710.3 322.4 Q709.7 322.8 709.2 322.3 Z" fill="none" stroke="#7e9ab5" stroke-width="0.9"/><path d="M830 322.2 L840 322.2" stroke="#4f7399" stroke-width="1.1"/><path d="M830.4 319.9 L831.3 316.8 L838.4 309.7 L840.9 312.2 L833.8 319.3 Z" fill="none" stroke="#2f5a83" stroke-width="0.95"/><path d="M830.4 319.9 L831.3 316.8 L833.8 319.3Z" fill="#2f5a83"/><path d="M848.8 309.5 L862.4 309.5 L862.4 318.2 L855 318.2 L851 322.2 L851 318.2 L848.8 318.2 Z" fill="none" stroke="#4f7399" stroke-width="1"/><path d="M870.1 313.7 L873.7 310.2 M870.1 313.7 L873.7 317.3 M870.1 313.7 L879.3 313.7 A4.3 4.2 0 0 1 879.7 322" fill="none" stroke="#5b7fa3" stroke-width="0.95"/></g><g transform="translate(0 118.59)"><rect x="707.4" y="308.9" width="4.1" height="7.6" rx="0.4" fill="none" stroke="#8ea7bf" stroke-width="0.9"/><circle cx="709.45" cy="311.5" r="0.75" fill="#3f6790"/><circle cx="709.45" cy="314.2" r="0.75" fill="#3f6790"/><path d="M709.2 322.3 L708.2 321.3 Q707.9 320.9 708.3 320.5 L713.6 315.2 Q712.8 312.6 714.9 311.6 Q716.6 310.9 718 311.6 L716.2 313.4 L716.6 314.9 L718.1 315.3 L719.9 313.5 Q720.7 315.2 719.8 316.9 Q718.5 318.8 716.1 317.9 L710.3 322.4 Q709.7 322.8 709.2 322.3 Z" fill="none" stroke="#7e9ab5" stroke-width="0.9"/><path d="M830 322.2 L840 322.2" stroke="#4f7399" stroke-width="1.1"/><path d="M830.4 319.9 L831.3 316.8 L838.4 309.7 L840.9 312.2 L833.8 319.3 Z" fill="none" stroke="#2f5a83" stroke-width="0.95"/><path d="M830.4 319.9 L831.3 316.8 L833.8 319.3Z" fill="#2f5a83"/><path d="M848.8 309.5 L862.4 309.5 L862.4 318.2 L855 318.2 L851 322.2 L851 318.2 L848.8 318.2 Z" fill="none" stroke="#4f7399" stroke-width="1"/><path d="M870.1 313.7 L873.7 310.2 M870.1 313.7 L873.7 317.3 M870.1 313.7 L879.3 313.7 A4.3 4.2 0 0 1 879.7 322" fill="none" stroke="#5b7fa3" stroke-width="0.95"/></g><g transform="translate(0 158.12)"><rect x="707.4" y="308.9" width="4.1" height="7.6" rx="0.4" fill="none" stroke="#8ea7bf" stroke-width="0.9"/><circle cx="709.45" cy="311.5" r="0.75" fill="#3f6790"/><circle cx="709.45" cy="314.2" r="0.75" fill="#3f6790"/><path d="M709.2 322.3 L708.2 321.3 Q707.9 320.9 708.3 320.5 L713.6 315.2 Q712.8 312.6 714.9 311.6 Q716.6 310.9 718 311.6 L716.2 313.4 L716.6 314.9 L718.1 315.3 L719.9 313.5 Q720.7 315.2 719.8 316.9 Q718.5 318.8 716.1 317.9 L710.3 322.4 Q709.7 322.8 709.2 322.3 Z" fill="none" stroke="#7e9ab5" stroke-width="0.9"/><path d="M830 322.2 L840 322.2" stroke="#4f7399" stroke-width="1.1"/><path d="M830.4 319.9 L831.3 316.8 L838.4 309.7 L840.9 312.2 L833.8 319.3 Z" fill="none" stroke="#2f5a83" stroke-width="0.95"/><path d="M830.4 319.9 L831.3 316.8 L833.8 319.3Z" fill="#2f5a83"/><path d="M848.8 309.5 L862.4 309.5 L862.4 318.2 L855 318.2 L851 322.2 L851 318.2 L848.8 318.2 Z" fill="none" stroke="#4f7399" stroke-width="1"/><path d="M870.1 313.7 L873.7 310.2 M870.1 313.7 L873.7 317.3 M870.1 313.7 L879.3 313.7 A4.3 4.2 0 0 1 879.7 322" fill="none" stroke="#5b7fa3" stroke-width="0.95"/></g></svg>
<svg style="left:840px;top:288px" width="44" height="18" viewBox="840 288 44 18"><path d="M849.3 301.6 L856.8 301.6" stroke="#b9c9d9" stroke-width="0.9"/><path d="M849.6 300 L850.4 297.4 L855.6 292.2 L857.5 294.1 L852.3 299.3 Z" fill="none" stroke="#c9d6e3" stroke-width="0.9"/><circle cx="870.9" cy="297.2" r="4.7" fill="none" stroke="#b9c9d9" stroke-width="0.9"/><path d="M868.7 295 L873.1 299.4 M873.1 295 L868.7 299.4" stroke="#b9c9d9" stroke-width="0.9"/></svg>
<div class="abs" style="left:684px;top:480.8px;width:213.4px;height:1px;background:#f4a3b6;"></div>
<div class="abs" style="left:684px;top:485.3px;width:213.4px;height:21.5px;background:#dcdcdc;"></div>
<div class="t" style="left:741.28px;transform-origin:0 0;top:489.61px;font-size:10.58px;color:#4a4a4a;transform:scaleX(0.8909);">METADATA COLUMNS</div>
<div class="abs" style="left:684px;top:510.8px;width:213.4px;height:21.4px;background:#dcdcdc;"></div>
<div class="t" style="left:736.90px;transform-origin:0 0;top:514.91px;font-size:10.58px;color:#4a4a4a;transform:scaleX(0.8483);">EDIT IN REPORT DESIGN</div>
<div class="abs" style="left:0px;top:536px;width:900px;height:28px;background:#163756;"></div>
<div class="abs" style="left:6.2px;top:541.1px;width:147.5px;height:17.8px;background:#fff;"></div>
<div class="t" style="left:12.47px;transform-origin:0 0;top:545.02px;font-size:9.86px;color:#b5b5b5;transform:scaleX(0.9770);">Search Table</div>
<svg style="left:0px;top:536px" width="900" height="28" viewBox="0 536 900 28"><circle cx="141.6" cy="548.9" r="2.9" fill="none" stroke="#4d7399" stroke-width="1.15"/><path d="M143.7 551 L146.6 553.9" stroke="#4d7399" stroke-width="1.3"/><path d="M165.5 553.5 L171.6 547.2 L177.7 553.5" fill="none" stroke="#dfe5ec" stroke-width="1.35"/><path d="M197.5 547.5 L204 553.8 L210.5 547.5" fill="none" stroke="#dfe5ec" stroke-width="1.35"/><path d="M355.2 546.2 L355.2 554" stroke="#8c9cad" stroke-width="1.3"/><path d="M369 550.1 L357.4 550.1 M362.7 545 L357.4 550.1 L362.7 555.2" fill="none" stroke="#a9b7c6" stroke-width="1.05"/><path d="M404.7 550.1 L390.4 550.1 M397 543.9 L390.4 550.1 L397 556.6" fill="none" stroke="#dfe5ec" stroke-width="1.15"/><path d="M521 550.1 L535.3 550.1 M529.2 544.2 L535.3 550.1 L529.2 556.3" fill="none" stroke="#dfe5ec" stroke-width="1.15"/><path d="M570.9 546.2 L570.9 554" stroke="#8c9cad" stroke-width="1.3"/><path d="M557.2 550.1 L568 550.1 M563 545.3 L568 550.1 L563 555.1" fill="none" stroke="#a9b7c6" stroke-width="1.05"/></svg>
<div class="t" style="left:419.38px;transform-origin:0 0;top:544.45px;font-size:10.29px;color:#fff;transform:scaleX(0.9062);">Row:</div>
<div class="abs" style="left:443.6px;top:539.7px;width:35.8px;height:20.7px;background:#fff;"></div>
<div class="t" style="left:458.82px;width:5.56px;text-align:center;transform-origin:50% 0;top:544.60px;font-size:10.00px;color:#5a5a5a;">0</div>
<div class="t" style="left:482.82px;transform-origin:0 0;top:545.58px;font-size:10.14px;color:#fff;transform:scaleX(1.0500);">of 33</div>
<div class="abs" style="left:707.8px;top:536px;width:29.2px;height:28px;background:#31679a;"></div>
<div class="abs" style="left:737px;top:536px;width:28px;height:28px;background:#30659a;"></div>
<svg style="left:700px;top:536px" width="200" height="28" viewBox="700 536 200 28"><path d="M715 544.5 L729 544.5 M715 556.5 L729 556.5" stroke="#dfe5ec" stroke-width="1"/><path d="M722 546.3 L722 554.3 M719.8 548.5 L722 546.3 L724.2 548.5 M719.8 552.1 L722 554.3 L724.2 552.1" fill="none" stroke="#dfe5ec" stroke-width="1"/><circle cx="750.8" cy="550.2" r="6.2" fill="none" stroke="#dfe5ec" stroke-width="1.15"/><path d="M744.2 557.1 L758 543.3" stroke="#dfe5ec" stroke-width="1.15"/><path d="M772.2 547 L775.2 550.2 L772.2 553.4 M786.4 547 L783.4 550.2 L786.4 553.4" fill="none" stroke="#8fa3b8" stroke-width="1"/><path d="M777.2 544.5 L777.2 557 M782 544.5 L782 557" stroke="#8fa3b8" stroke-width="1.1" stroke-dasharray="1.3 1.2"/></svg>
<div class="abs" style="left:804.3px;top:548.8px;width:86.3px;height:3px;background:#d9d9d9;border-radius:1px"></div>
<div class="abs" style="left:832.3px;top:546.8px;width:7px;height:7px;background:#f03d62;border-radius:50%"></div>
</body></html>
